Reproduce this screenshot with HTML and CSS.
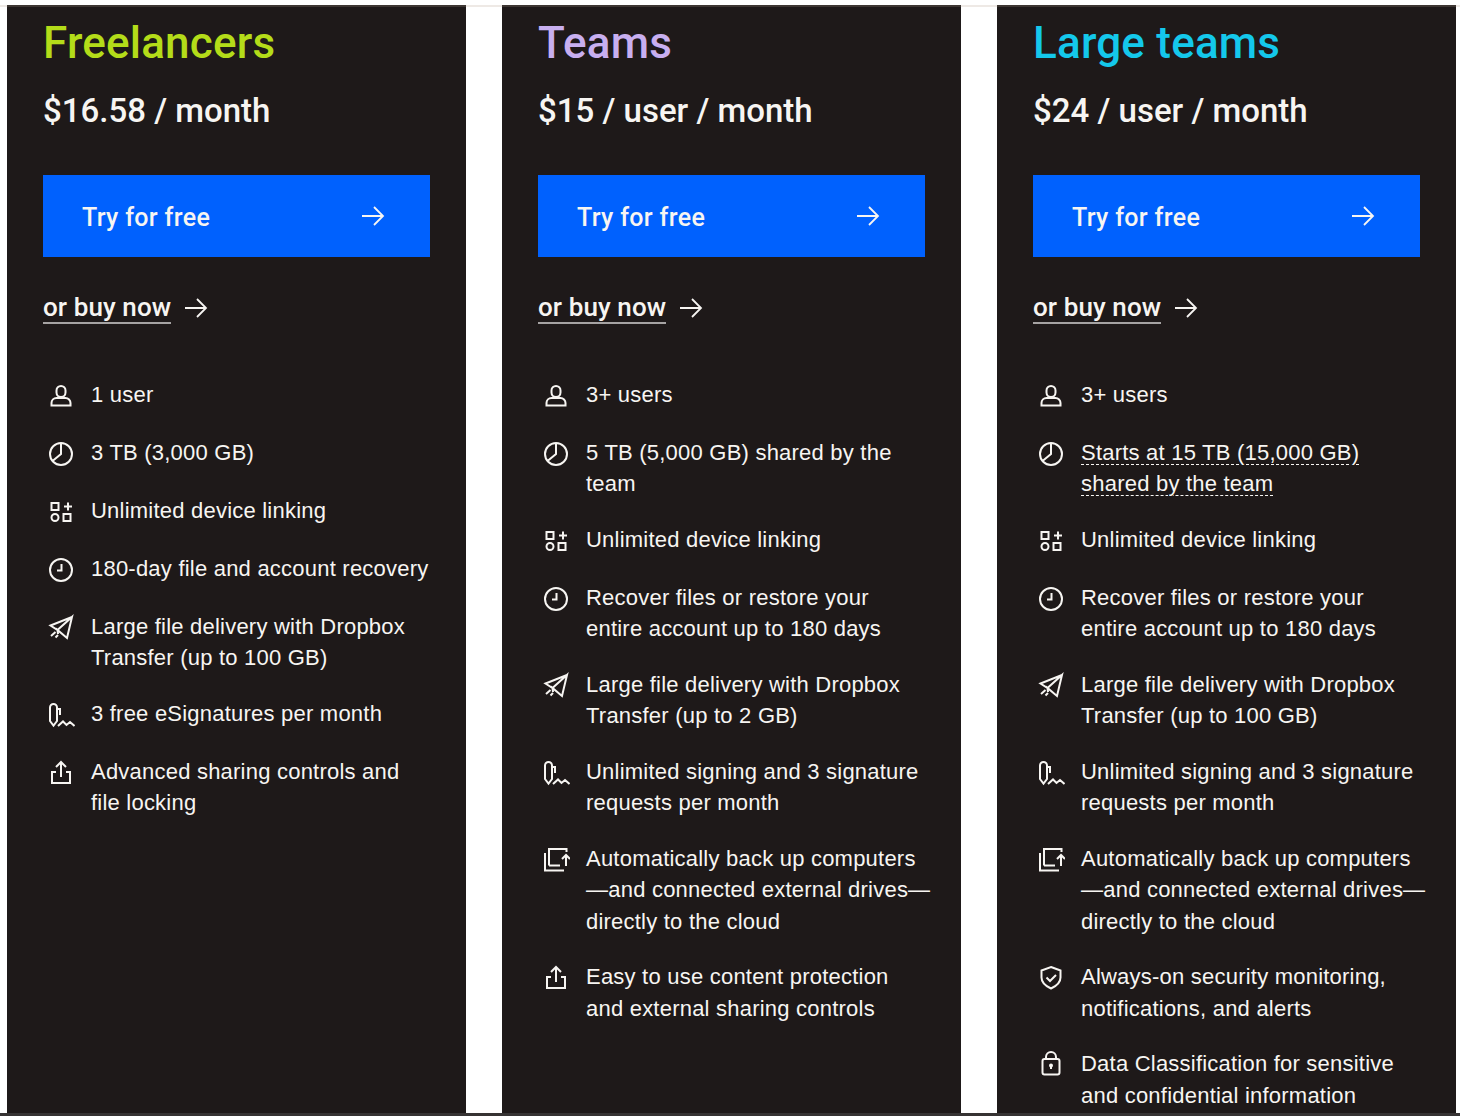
FILE: index.html
```html
<!DOCTYPE html>
<html lang="en">
<head>
<meta charset="utf-8">
<title>Dropbox plans</title>
<link rel="stylesheet" href="styles.css">
</head>
<body>
<svg class="defs" width="0" height="0" aria-hidden="true">
  <symbol id="i-arrow" viewBox="0 0 24 24"><path d="M1 12h21M13 3l9 9-9 9"/></symbol>
  <symbol id="i-user" viewBox="0 0 28 28"><path d="M14 4a4.5 4.5 0 0 1 4.5 4.5v2a4.5 4.5 0 0 1-9 0v-2A4.5 4.5 0 0 1 14 4z"/><path d="M4.5 23.500V21a5 5 0 0 1 5-5h9a5 5 0 0 1 5 5v2.500z"/></symbol>
  <symbol id="i-pie" viewBox="0 0 28 28"><circle cx="14" cy="14" r="11"/><path d="M14 3v11l-8.500 7"/></symbol>
  <symbol id="i-grid" viewBox="0 0 28 28"><rect x="4.500" y="5" width="7" height="7"/><path d="M21 4.500v8M17 8.500h8"/><circle cx="8" cy="19.500" r="3.500"/><rect x="16.500" y="16" width="7" height="7"/></symbol>
  <symbol id="i-clock" viewBox="0 0 28 28"><circle cx="14" cy="14" r="11"/><path d="M14.500 8v6.500H10"/></symbol>
  <symbol id="i-plane" viewBox="0 0 28 28"><path d="M25 3L3.500 11.500l7 4.500L25 3l-5 21-9.500-8 .5 4"/><path d="M8.500 18L4 22M11 21l-2.500 2.500"/></symbol>
  <symbol id="i-sign" viewBox="0 0 28 28"><path d="M3 6.500a3.500 3.500 0 0 1 7 0V20l-3.500 4.500L3 20zM10 8h3v6"/><path d="M11 25l5-4.500 3.500 3.500 3.500-3 4.500 4"/></symbol>
  <symbol id="i-share" viewBox="0 0 28 28"><path d="M9 13H5v11h18V13h-4"/><path d="M14 18V3M9 8l5-5 5 5"/></symbol>
  <symbol id="i-backup" viewBox="0 0 28 28"><path d="M3 7v17.500h19"/><path d="M7 19.500V3h17.500v3M7 19.500h11"/><path d="M24 20V9.500M20 13l4-4 4 4"/></symbol>
  <symbol id="i-shield" viewBox="0 0 28 28"><path d="M14 3l9.500 3.500v7c0 5-4 8.500-9.500 11-5.500-2.500-9.500-6-9.500-11v-7z"/><path d="M9.500 13.500l3.500 3.500 6-6"/></symbol>
  <symbol id="i-lock" viewBox="0 0 28 28"><rect x="5.500" y="8" width="17" height="15.500" rx="2"/><path d="M9 8V6a5 5 0 0 1 10 0v2"/><path d="M14 14v4"/><circle cx="14" cy="14.500" r="1"/></symbol>
</svg>
<main class="page">
  <div class="plans">
    <section class="card">
      <h2 class="name lime">Freelancers</h2>
      <p class="price">$16.58 / month</p>
      <a class="try" href="#"><span>Try for free</span><svg class="arrow"><use href="#i-arrow"/></svg></a>
      <a class="buy" href="#"><span class="buy-text">or buy now</span><svg class="arrow"><use href="#i-arrow"/></svg></a>
      <ul class="features">
        <li class="feature"><span class="ico"><svg><use href="#i-user"/></svg></span><span class="txt">1 user</span></li>
        <li class="feature"><span class="ico"><svg><use href="#i-pie"/></svg></span><span class="txt">3 TB (3,000 GB)</span></li>
        <li class="feature"><span class="ico"><svg><use href="#i-grid"/></svg></span><span class="txt">Unlimited device linking</span></li>
        <li class="feature"><span class="ico"><svg><use href="#i-clock"/></svg></span><span class="txt">180-day file and account recovery</span></li>
        <li class="feature"><span class="ico"><svg><use href="#i-plane"/></svg></span><span class="txt">Large file delivery with Dropbox<br>Transfer (up to 100 GB)</span></li>
        <li class="feature"><span class="ico"><svg><use href="#i-sign"/></svg></span><span class="txt">3 free eSignatures per month</span></li>
        <li class="feature"><span class="ico"><svg><use href="#i-share"/></svg></span><span class="txt">Advanced sharing controls and<br>file locking</span></li>
      </ul>
    </section>
    <section class="card">
      <h2 class="name lavender">Teams</h2>
      <p class="price">$15 / user / month</p>
      <a class="try" href="#"><span>Try for free</span><svg class="arrow"><use href="#i-arrow"/></svg></a>
      <a class="buy" href="#"><span class="buy-text">or buy now</span><svg class="arrow"><use href="#i-arrow"/></svg></a>
      <ul class="features">
        <li class="feature"><span class="ico"><svg><use href="#i-user"/></svg></span><span class="txt">3+ users</span></li>
        <li class="feature"><span class="ico"><svg><use href="#i-pie"/></svg></span><span class="txt">5 TB (5,000 GB) shared by the<br>team</span></li>
        <li class="feature"><span class="ico"><svg><use href="#i-grid"/></svg></span><span class="txt">Unlimited device linking</span></li>
        <li class="feature"><span class="ico"><svg><use href="#i-clock"/></svg></span><span class="txt">Recover files or restore your<br>entire account up to 180 days</span></li>
        <li class="feature"><span class="ico"><svg><use href="#i-plane"/></svg></span><span class="txt">Large file delivery with Dropbox<br>Transfer (up to 2 GB)</span></li>
        <li class="feature"><span class="ico"><svg><use href="#i-sign"/></svg></span><span class="txt">Unlimited signing and 3 signature<br>requests per month</span></li>
        <li class="feature"><span class="ico"><svg><use href="#i-backup"/></svg></span><span class="txt">Automatically back up computers<br>—and connected external drives—<br>directly to the cloud</span></li>
        <li class="feature"><span class="ico"><svg><use href="#i-share"/></svg></span><span class="txt">Easy to use content protection<br>and external sharing controls</span></li>
      </ul>
    </section>
    <section class="card">
      <h2 class="name cyan">Large teams</h2>
      <p class="price">$24 / user / month</p>
      <a class="try" href="#"><span>Try for free</span><svg class="arrow"><use href="#i-arrow"/></svg></a>
      <a class="buy" href="#"><span class="buy-text">or buy now</span><svg class="arrow"><use href="#i-arrow"/></svg></a>
      <ul class="features">
        <li class="feature"><span class="ico"><svg><use href="#i-user"/></svg></span><span class="txt">3+ users</span></li>
        <li class="feature"><span class="ico"><svg><use href="#i-pie"/></svg></span><span class="txt"><span class="dashed">Starts at 15 TB (15,000 GB)</span><br><span class="dashed">shared by the team</span></span></li>
        <li class="feature"><span class="ico"><svg><use href="#i-grid"/></svg></span><span class="txt">Unlimited device linking</span></li>
        <li class="feature"><span class="ico"><svg><use href="#i-clock"/></svg></span><span class="txt">Recover files or restore your<br>entire account up to 180 days</span></li>
        <li class="feature"><span class="ico"><svg><use href="#i-plane"/></svg></span><span class="txt">Large file delivery with Dropbox<br>Transfer (up to 100 GB)</span></li>
        <li class="feature"><span class="ico"><svg><use href="#i-sign"/></svg></span><span class="txt">Unlimited signing and 3 signature<br>requests per month</span></li>
        <li class="feature"><span class="ico"><svg><use href="#i-backup"/></svg></span><span class="txt">Automatically back up computers<br>—and connected external drives—<br>directly to the cloud</span></li>
        <li class="feature"><span class="ico"><svg><use href="#i-shield"/></svg></span><span class="txt">Always-on security monitoring,<br>notifications, and alerts</span></li>
        <li class="feature"><span class="ico"><svg><use href="#i-lock"/></svg></span><span class="txt">Data Classification for sensitive<br>and confidential information</span></li>
      </ul>
    </section>
  </div>
  <div class="band"></div>
</main>
</body>
</html>
```
FILE: styles.css
```css
* { box-sizing: border-box; }
html, body { margin: 0; padding: 0; background: #fff; }
body { font-family: Roboto, "Liberation Sans", sans-serif; color: #f7f5f2; }
.defs { position: absolute; }
.page { height: 1116px; padding-top: 5px; display: flex; flex-direction: column; overflow: hidden; }
.plans {
  flex: 1; min-height: 0; display: flex; gap: 36px; padding-left: 7px; padding-right: 4px;
  border-top: 2px solid #eee9e5;
}
.card {
  flex: 1 1 0; margin-top: -2px; padding: 0 36px; background: #1e1919;
  border-top: 2px solid #3d3632; overflow: hidden;
}
.band { flex: none; height: 3px; background: #363333; }
.name { margin: 12px 0 0; font-size: 44px; line-height: 48px; font-weight: 500; letter-spacing: 0.2px; }
.lime { color: #b4dc19; }
.lavender { color: #c8aff0; }
.cyan { color: #14c8eb; }
.price { margin: 24px 0 0; font-size: 33px; line-height: 40px; font-weight: 500; }
.try {
  display: flex; align-items: center; justify-content: space-between; height: 82px; margin-top: 44px;
  padding: 0 45px 0 39px; background: #0061fe; color: #f7f5f2; font-size: 25px; font-weight: 500; letter-spacing: 0.33px; text-decoration: none;
}
.try span { padding-top: 2px; }
.arrow { width: 24px; height: 24px; fill: none; stroke: #f7f5f2; stroke-width: 1.8; flex: none; }
.buy { display: flex; align-items: center; gap: 13px; height: 36px; margin-top: 33px; color: #f7f5f2; font-size: 26px; font-weight: 500; letter-spacing: 0.1px; text-decoration: none; }
.buy-text { border-bottom: 2px solid #a6a3a3; line-height: 29px; }
.features { list-style: none; margin: 52.6px 0 0; padding: 0; display: flex; flex-direction: column; gap: 24px; }
.feature { display: flex; gap: 12px; min-height: 34px; white-space: nowrap; }
.ico { flex: 0 0 36px; height: 34px; display: flex; align-items: center; justify-content: center; }
.ico svg { width: 28px; height: 28px; fill: none; stroke: #f7f5f2; stroke-width: 2; overflow: visible; }
.txt { font-family: "Liberation Sans", Arial, sans-serif; font-size: 22px; line-height: 31.5px; letter-spacing: 0.22px; }
.dashed { text-decoration: underline dashed 1px; text-underline-offset: 4px; }
```
